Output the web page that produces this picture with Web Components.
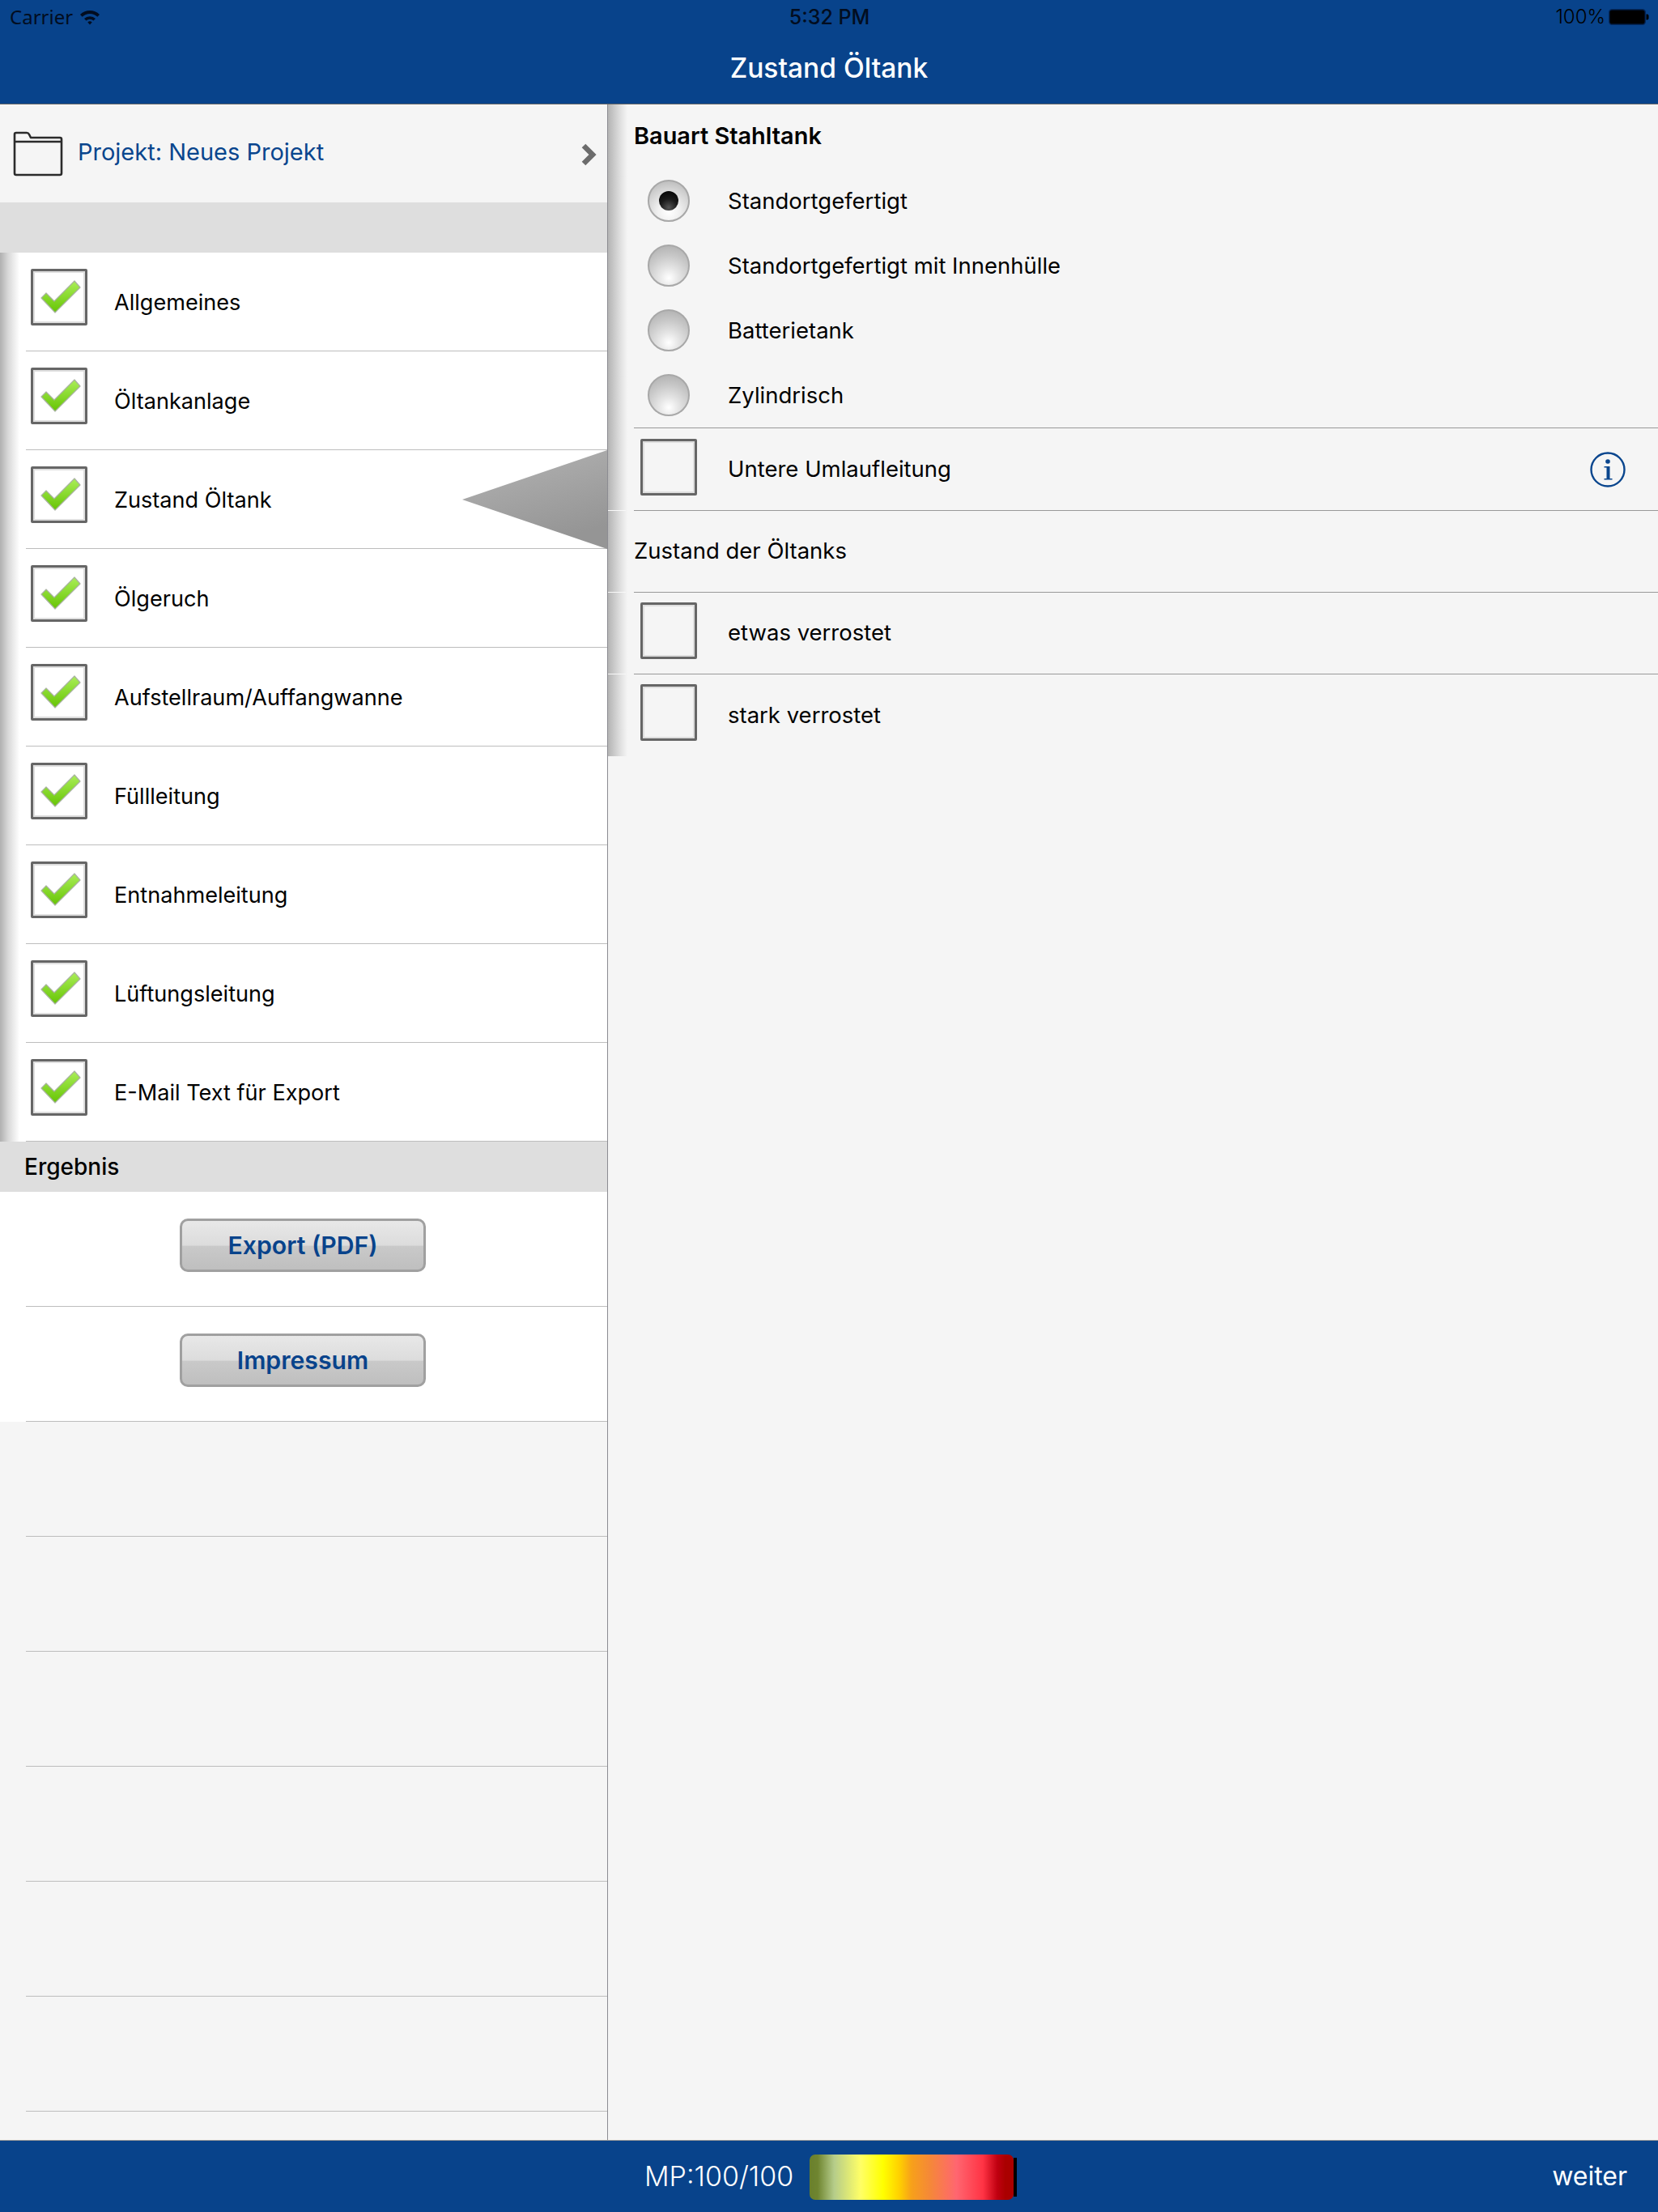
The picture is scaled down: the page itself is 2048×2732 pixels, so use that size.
<!DOCTYPE html>
<html lang="de"><head><meta charset="utf-8"><title>Zustand Öltank</title>
<style>
html,body{margin:0;padding:0;background:#f5f5f5}
body{font-family:Inter,"Liberation Sans",sans-serif;color:#000}
</style></head><body>
<app-screen>
  <status-bar slot="top"></status-bar>
  <nav-bar slot="top">Zustand Öltank</nav-bar>
  <side-panel slot="left">
    <project-row>Projekt: Neues Projekt</project-row>
    <section-head></section-head>
    <menu-row>Allgemeines</menu-row>
    <menu-row>Öltankanlage</menu-row>
    <menu-row active>Zustand Öltank</menu-row>
    <menu-row>Ölgeruch</menu-row>
    <menu-row>Aufstellraum/Auffangwanne</menu-row>
    <menu-row>Füllleitung</menu-row>
    <menu-row>Entnahmeleitung</menu-row>
    <menu-row>Lüftungsleitung</menu-row>
    <menu-row>E-Mail Text für Export</menu-row>
    <section-head>Ergebnis</section-head>
    <button-row>Export (PDF)</button-row>
    <button-row>Impressum</button-row>
    <empty-row></empty-row><empty-row></empty-row><empty-row></empty-row>
    <empty-row></empty-row><empty-row></empty-row><empty-row></empty-row>
  </side-panel>
  <detail-panel slot="right">
    <radio-group title="Bauart Stahltank">
      <radio-row checked>Standortgefertigt</radio-row>
      <radio-row>Standortgefertigt mit Innenhülle</radio-row>
      <radio-row>Batterietank</radio-row>
      <radio-row>Zylindrisch</radio-row>
    </radio-group>
    <check-row info>Untere Umlaufleitung</check-row>
    <label-row>Zustand der Öltanks</label-row>
    <check-row>etwas verrostet</check-row>
    <check-row last>stark verrostet</check-row>
  </detail-panel>
  <foot-bar slot="bottom"></foot-bar>
</app-screen>
<script>
function def(name, css, html, extra){
  customElements.define(name, class extends HTMLElement{
    constructor(){super();const r=this.attachShadow({mode:'open'});
      r.innerHTML='<style>'+css+'</style>'+(typeof html==='function'?html(this):html);}
    connectedCallback(){ if(extra) extra(this); }
  });
}
const CHECK=`<svg width="70" height="70" viewBox="0 0 70 70" style="position:absolute;left:-3px;top:-3px"><defs><linearGradient id="g" x1="0" y1="0" x2="0" y2="1"><stop offset="0" stop-color="#aaee58"/><stop offset="1" stop-color="#66c404"/></linearGradient></defs><polygon points="13,36 19,30 29,40 54,15 61,23 30,54" fill="url(#g)" stroke="#a9b3a0" stroke-width="1.2" stroke-linejoin="round"/></svg>`;

def('tick-box',`:host{display:block;width:70px;height:70px;box-sizing:border-box;border:3px solid #666;border-radius:2px;position:relative;box-shadow:inset 0 0 0 2px #dedede;flex:none}`,
  el=>el.hasAttribute('checked')?CHECK:'');

def('app-screen',`:host{display:flex;flex-direction:column;width:2048px;height:2732px;overflow:hidden;background:#f5f5f5}
 .mid{display:flex;flex:1;min-height:0}`,
 `<slot name="top"></slot><div class="mid"><slot name="left"></slot><slot name="right"></slot></div><slot name="bottom"></slot>`);

def('status-bar',`:host{display:flex;align-items:center;height:42px;background:#08438b;color:#020d20;font:400 24px/42px "Open Sans",Inter,sans-serif;padding:0 11px 0 12px;position:relative}
 .l{display:flex;align-items:center;gap:8px;flex:1;font-family:"Noto Sans",sans-serif}
 .c{flex:none;font-weight:500;font-family:Inter,sans-serif;font-size:25px}
 .r{flex:1;display:flex;justify-content:flex-end;align-items:center;gap:4px;font-family:Inter,sans-serif;font-weight:300;color:#000}`,
 `<div class="l"><span>Carrier</span><svg width="26" height="20" viewBox="0 0 26 20"><path d="M1 7 A17 17 0 0 1 25 7 L22.4 9.8 A13.4 13.4 0 0 0 3.6 9.8Z M6 12 A10 10 0 0 1 20 12 L17.5 14.6 A6.5 6.5 0 0 0 8.5 14.6Z M10.3 16.4 A4 4 0 0 1 15.7 16.4 L13 19.4Z" fill="#020d20"/></svg></div>
  <div class="c">5:32 PM</div>
  <div class="r"><span>100%</span><svg width="50" height="20" viewBox="0 0 50 20"><rect x=".7" y=".7" width="44.6" height="18.6" rx="3.5" fill="#000" stroke="#03265a" stroke-width="1.4"/><path d="M46.5 6.5h1a2 2 0 0 1 2 2v3a2 2 0 0 1-2 2h-1z" fill="#000"/></svg></div>`);

def('nav-bar',`:host{display:flex;align-items:center;justify-content:center;height:87px;box-sizing:border-box;background:#08438b;color:#fff;font:500 33.6px/1 Inter,sans-serif;border-bottom:1px solid #666;padding-bottom:2px}`,`<slot></slot>`);

def('side-panel',`:host{display:flex;flex-direction:column;width:751px;box-sizing:border-box;border-right:1px solid #8c8c92;background:#f5f5f5;position:relative;flex:none}`,`<slot></slot>`);

def('project-row',`:host{display:flex;align-items:center;height:121px;padding:0 12px 0 16px;color:#0a468e;font:400 29px/1 Inter,sans-serif;background:#f5f5f5}
 span{flex:1;margin-left:18px;padding-bottom:5px}
 svg{flex:none}`,
 `<svg width="62" height="56" viewBox="0 0 62 56"><path d="M2 10V4Q2 2 4 2H17Q19 2 20 4L22 8H58Q60 8 60 10V52Q60 54 58 54H4Q2 54 2 52ZM2 13H60" fill="none" stroke="#2b2b2b" stroke-width="2.6" stroke-linejoin="round"/></svg>
  <span><slot></slot></span>
  <svg width="22" height="28" viewBox="0 0 22 28" style="margin-top:2px"><path d="M5 3 L16 14 L5 25" fill="none" stroke="#6c6c6c" stroke-width="6.5"/></svg>`);

def('section-head',`:host{display:flex;align-items:center;height:62px;box-sizing:border-box;background:#dedede;padding-left:30px;font:500 28px/1 Inter,sans-serif;flex:none}`,`<slot></slot>`);

def('menu-row',`:host{display:block;height:122px;box-sizing:border-box;background:#fff linear-gradient(90deg,#b0b0b0 0,#d8d8d8 10px,#fff 24px) no-repeat;background-size:24px 100%;position:relative;flex:none}
 .in{margin-left:32px;display:flex;border-bottom:1px solid #bdbdbd;height:122px;box-sizing:border-box;font:400 27.1px/1 Inter,sans-serif;align-items:center}
 tick-box{margin-left:6px;align-self:flex-start;margin-top:20px}
 span{margin-left:33px;padding-top:2px}
 svg.tri{position:absolute;left:571px;top:0}`,
 el=>`<div class="in"><tick-box checked></tick-box><span><slot></slot></span></div>`+
  (el.hasAttribute('active')?`<svg class="tri" width="179" height="122" viewBox="0 0 179 122"><defs><linearGradient id="t" x1="0" y1="0" x2=".4" y2="1"><stop offset="0" stop-color="#b4b4b4"/><stop offset="1" stop-color="#959595"/></linearGradient></defs><polygon points="0,61 179,0 179,122" fill="url(#t)"/></svg>`:''));

def('button-row',`:host{display:block;height:142px;box-sizing:border-box;background:#fff;flex:none}
 .in{height:142px;box-sizing:border-box;margin-left:32px;border-bottom:1px solid #bdbdbd;position:relative}
 .b{position:absolute;left:190px;top:33px;width:304px;height:66px;box-sizing:border-box;border:3px solid #a0a0a0;border-radius:10px;background:linear-gradient(180deg,#e8e8e8 0,#dcdcdc 50%,#c9c9c9 52%,#bfbfbf 100%);display:flex;align-items:center;justify-content:center;color:#08438b;font:600 30.2px/1 Inter,sans-serif}`,
 `<div class="in"><div class="b"><slot></slot></div></div>`);

def('empty-row',`:host{display:block;height:142px;flex:none;box-sizing:border-box}
 div{height:142px;box-sizing:border-box;margin-left:32px;border-bottom:1px solid #bdbdbd}`,`<div></div>`);

const SHADE='linear-gradient(90deg,#b4b4b4 0,#dcdcdc 14px,#f5f5f5 24px)';
def('detail-panel',`:host{display:block;flex:1;background:#f5f5f5}`,`<slot></slot>`);

def('radio-group',`:host{display:block;height:401px;box-sizing:border-box;background:${SHADE} no-repeat;background-size:24px 100%}
 h2{margin:0;height:79px;box-sizing:border-box;padding:0 0 0 32px;display:flex;align-items:center;font:600 28.9px/1 Inter,sans-serif}
 .l{margin-left:32px;border-bottom:1px solid #999;padding-bottom:0;height:321px;box-sizing:border-box}`,
 el=>`<h2>${el.getAttribute('title')}</h2><div class="l"><slot></slot></div>`);

def('radio-row',`:host{display:flex;align-items:center;height:80px;font:400 27.5px/1 Inter,sans-serif}
 i{display:block;flex:none;width:52px;height:52px;box-sizing:border-box;margin-left:17px;border-radius:50%;border:2px solid #a8a8a8;background:radial-gradient(circle at 50% 82%,#fff 0,#e4e4e4 28%,#c8c8c8 60%,#aaa 100%);position:relative}
 i.on{background:radial-gradient(circle at 50% 78%,#fff 0,#f0f0f0 30%,#d4d4d4 62%,#b0b0b0 100%)}
 i.on::after{content:"";position:absolute;left:12px;top:12px;width:24px;height:24px;border-radius:50%;background:radial-gradient(circle at 50% 85%,#555 0,#1a1a1a 45%,#000 100%)}
 span{margin-left:47px;padding-top:2px}`,
 el=>`<i class="${el.hasAttribute('checked')?'on':''}"></i><span><slot></slot></span>`);

def('check-row',`:host{display:block;height:101px;box-sizing:border-box;background:${SHADE} no-repeat;background-size:24px 100%;position:relative}
 :host::before{content:"";position:absolute;left:0;bottom:0;width:22px;height:1px;background:#f8f8f8}
 .in{margin-left:32px;height:101px;box-sizing:border-box;border-bottom:1px solid #999;display:flex;align-items:center;font:400 27.5px/1 Inter,sans-serif}
 :host([last]) .in{border-bottom:0}
 :host([last])::before{display:none}
 tick-box{align-self:flex-start;margin:12px 0 0 8px}
 span{margin-left:38px;flex:1}
 svg{margin-right:40px;flex:none}`,
 el=>`<div class="in"><tick-box></tick-box><span><slot></slot></span>${el.hasAttribute('info')?`<svg width="44" height="44" viewBox="0 0 44 44"><circle cx="22" cy="22" r="20.5" fill="none" stroke="#0a468e" stroke-width="2.4"/><circle cx="22" cy="12" r="2.8" fill="#0a468e"/><path d="M17.5 18h7v15h3v1.6h-10V33h3V19.6h-3z" fill="#0a468e"/></svg>`:''}</div>`);

def('label-row',`:host{display:block;height:101px;box-sizing:border-box;background:${SHADE} no-repeat;background-size:24px 100%;position:relative}
 :host::before{content:"";position:absolute;left:0;bottom:0;width:22px;height:1px;background:#f8f8f8}
 .in{margin-left:32px;height:101px;box-sizing:border-box;border-bottom:1px solid #999;display:flex;align-items:center;font:400 27.5px/1 Inter,sans-serif}`,
 `<div class="in"><slot></slot></div>`);

def('foot-bar',`:host{display:flex;align-items:center;height:89px;box-sizing:border-box;background:#08438b;border-top:1px solid #999;color:#fff;font:300 34px/1 Inter,sans-serif;padding:0 38px 0 796px;flex:none}
 .m{width:204px;flex:none;white-space:nowrap}
 .bar{width:252px;height:56px;margin-top:2px;border-radius:7px;flex:none;background:linear-gradient(90deg,#6a802c 0,#6f8530 4%,#b5cc8a 12%,#ffff66 25%,#ffff00 36%,#ffd000 44%,#f7a01a 50%,#f58838 59%,#ff6670 72%,#ff3344 85%,#c00010 92%,#aa0000 96%)}
 .stick{width:4px;height:48px;margin-top:2px;background:#000;flex:none}
 .w{margin-left:auto;font-weight:400;font-size:32px}`,
 `<span class="m">MP:100/100</span><div class="bar"></div><div class="stick"></div><span class="w">weiter</span>`);
</script>
</body></html>
